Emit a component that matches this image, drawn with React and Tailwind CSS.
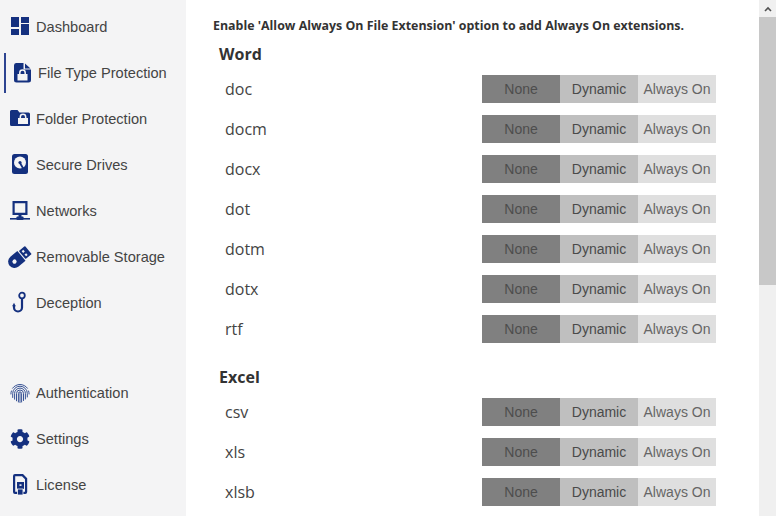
import React from "react";
import { FaCog } from "react-icons/fa";

const C = "#14307f";
const BG = "#f4f4f5";
const Svg = ({ children }) => (
  <svg viewBox="0 0 20 20" width="20" height="20" fill={C} className="overflow-visible">{children}</svg>
);

const IconDash = () => (
  <Svg>
    <rect x="1" y="0" width="8" height="10" />
    <rect x="11" y="0" width="8" height="6" />
    <rect x="1" y="12" width="8" height="6" />
    <rect x="11" y="7" width="8" height="11" />
  </Svg>
);
const IconFile = () => (
  <Svg>
    <path d="M4 0h7.5v6.5H19V17a2.5 2.5 0 0 1-2.5 2.5h-12A2.5 2.5 0 0 1 2 17V2.5A2.5 2.5 0 0 1 4 0z" />
    <path d="M13 0.5l5.5 5h-5.5z" />
    <rect x="5.5" y="11" width="10" height="6.5" fill={BG} />
    <path d="M7.8 11V9.8a2.7 2.7 0 0 1 5.4 0V11" fill="none" stroke={BG} strokeWidth="1.5" />
  </Svg>
);
const IconFolder = () => (
  <Svg>
    <path d="M1.5 1h6l2 2.5h9A1.5 1.5 0 0 1 20 5v10.5a1.5 1.5 0 0 1-1.5 1.5h-17A1.5 1.5 0 0 1 0 15.5v-13A1.5 1.5 0 0 1 1.5 1z" />
    <rect x="8" y="9" width="10" height="6" fill={BG} />
    <path d="M10.3 9V8a2.7 2.7 0 0 1 5.4 0v1" fill="none" stroke={BG} strokeWidth="1.5" />
  </Svg>
);
const IconDrive = () => (
  <Svg>
    <rect x="2" y="-1" width="16" height="20" rx="2.5" />
    <circle cx="10" cy="7.5" r="6" fill={BG} />
    <circle cx="10" cy="7.5" r="1.6" />
    <path d="M10 8l3.5 6" stroke={C} strokeWidth="1.8" />
  </Svg>
);
const IconNet = () => (
  <Svg>
    <path d="M2.5 0h15v14h-15zM4.7 2.2v9.6h10.6V2.2z" fillRule="evenodd" />
    <rect x="8.5" y="14" width="3" height="2" />
    <rect x="0" y="17" width="20" height="1.6" />
    <rect x="6.5" y="15.5" width="7" height="3.5" rx="0.8" />
  </Svg>
);
const IconUsb = () => (
  <Svg>
    <g transform="rotate(-40 10 10) scale(1.06) translate(-1.8 -0.6)">
      <path d="M6 4h8.5v12H6a6 6 0 0 1 0-12z" transform="translate(-1.5 0)" />
      <rect x="14" y="5" width="7.5" height="10" rx="0.8" />
      <rect x="16" y="6.8" width="2" height="2.2" fill={BG} />
      <rect x="16" y="11" width="2" height="2.2" fill={BG} />
      <circle cx="4.5" cy="10" r="2" fill={BG} />
    </g>
  </Svg>
);
const IconHook = () => (
  <Svg>
    <circle cx="12" cy="2.5" r="2.8" fill="none" stroke={C} strokeWidth="1.8" />
    <path d="M12 5.5v9a4 4 0 0 1-8 0V12" fill="none" stroke={C} strokeWidth="2.2" />
    <path d="M4 9.8l-1.8 3.4h3.6z" />
  </Svg>
);
const IconPrint = () => (
  <svg viewBox="0 0 20 20" width="20" height="20" fill="none" stroke="#2d4a8f" strokeWidth="0.95" strokeLinecap="round">
    <path d="M2.6 5.2A9 9 0 0 1 17.4 5.2" />
    <path d="M0.9 11A9.2 9.2 0 0 1 1.4 8M19.1 11A9.2 9.2 0 0 0 18.6 8" />
    <path d="M2.7 14.5V10.5A7.3 7.3 0 0 1 17.3 10.5V14" />
    <path d="M4.6 16.2V10.5A5.4 5.4 0 0 1 15.4 10.5V16" />
    <path d="M6.5 17.8V10.5A3.5 3.5 0 0 1 13.5 10.5V17.5" />
    <path d="M8.4 19V10.5A1.6 1.6 0 0 1 11.6 10.5V19" />
    <path d="M10 10v9.5" />
  </svg>
);
const IconCog = () => <FaCog size={20} color={C} />;
const IconLicense = () => (
  <Svg>
    <path d="M5 -1h8l4.2 4.2V17a2 2 0 0 1-2 2H5a2 2 0 0 1-2-2V1a2 2 0 0 1 2-2zM5.2 1.2V16.8h9.8V4.2L12 1.2z" fillRule="evenodd" />
    <rect x="7" y="7" width="7" height="7" />
    <rect x="7.5" y="14" width="5.5" height="6" stroke={BG} strokeWidth="0.8" />
    <rect x="9.5" y="9.3" width="2" height="1.6" fill={BG} />
  </Svg>
);

const top = [
  ["Dashboard", IconDash],
  ["File Type Protection", IconFile, true],
  ["Folder Protection", IconFolder],
  ["Secure Drives", IconDrive],
  ["Networks", IconNet],
  ["Removable Storage", IconUsb],
  ["Deception", IconHook],
];
const bottom = [
  ["Authentication", IconPrint],
  ["Settings", IconCog],
  ["License", IconLicense],
];

const NavItem = ({ label, Icon, active }) => (
  <div className={`relative flex h-[46px] items-center text-[14.6px] text-[#444] ${active ? "pl-[12px]" : "pl-[10px]"}`}>
    {active && <span className="absolute left-1 top-[3px] h-10 w-0.5 bg-[#2d4491]" />}
    <span className="mr-[6px] flex w-5 shrink-0 justify-center"><Icon /></span>
    <span className="pt-[2px]">{label}</span>
  </div>
);

const Row = ({ name }) => (
  <div className="flex h-10 items-center justify-between pl-[6px] pr-[43px]">
    <span className="text-base text-[#444]">{name}</span>
    <div className="flex h-7 text-[14px] font-['Liberation_Sans',sans-serif]">
      <span className="flex w-[78px] items-center justify-center bg-[#808080] text-[#4d4d4d]">None</span>
      <span className="flex w-[78px] items-center justify-center bg-[#bfbfbf] text-[#4a4a4a]">Dynamic</span>
      <span className="flex w-[78px] items-center justify-center bg-[#dfdfdf] text-[#666]">Always On</span>
    </div>
  </div>
);

export default function App() {
  return (
    <div className="flex h-[516px] w-[776px] overflow-hidden bg-white font-['Liberation_Sans',sans-serif]">
      <aside className="flex w-[186px] shrink-0 flex-col bg-[#f4f4f5] pt-[4px]">
        {top.map(([l, I, a]) => <NavItem key={l} label={l} Icon={I} active={a} />)}
        <div className="h-[44px]" />
        {bottom.map(([l, I]) => <NavItem key={l} label={l} Icon={I} />)}
      </aside>
      <main className="min-w-0 flex-1 overflow-hidden pl-[27px] pt-[17px] font-['Open_Sans',sans-serif]">
        <p className="text-[12.4px] font-bold leading-[18px] text-[#333]">Enable 'Allow Always On File Extension' option to add Always On extensions.</p>
        <div className="pl-[6px]">
          <h2 className="mt-[8px] h-[24px] text-[16px] font-bold leading-[22px] text-[#333]">Word</h2>
          <div className="mt-[2px]">
            {["doc", "docm", "docx", "dot", "dotm", "dotx", "rtf"].map((n) => <Row key={n} name={n} />)}
          </div>
          <h2 className="mt-[17px] h-[24px] text-[16px] font-bold leading-[22px] text-[#333]">Excel</h2>
          <div className="mt-[2px]">
            {["csv", "xls", "xlsb"].map((n) => <Row key={n} name={n} />)}
          </div>
        </div>
      </main>
      <div className="flex w-[17px] shrink-0 flex-col bg-[#f0f0f0]">
        <div className="flex h-[17px] items-center justify-center">
          <svg width="8" height="6" viewBox="0 0 8 6"><path d="M1 5l3-3 3 3" fill="none" stroke="#505050" strokeWidth="1.6" /></svg>
        </div>
        <div className="h-[268px] bg-[#c8c8c8]" />
      </div>
    </div>
  );
}
